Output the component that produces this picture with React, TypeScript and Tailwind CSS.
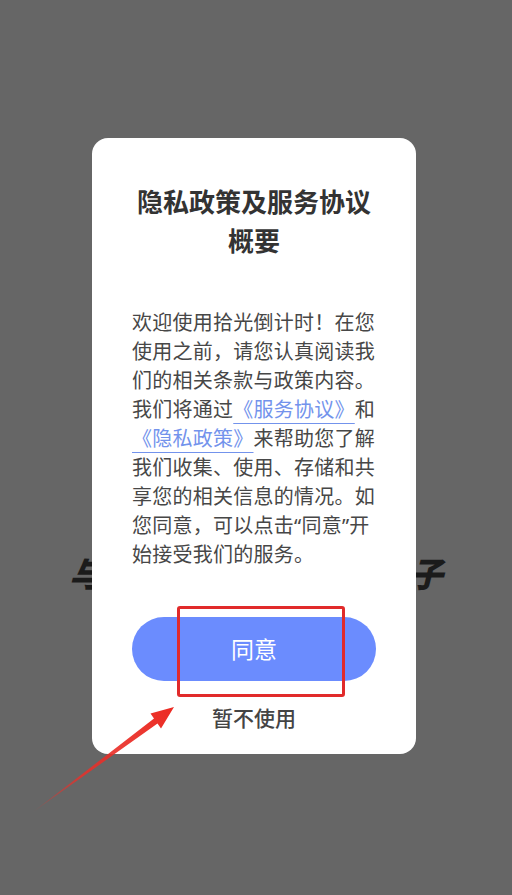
import React from "react";

const font = { fontFamily: '"Noto Sans", "Noto Sans CJK SC", sans-serif' };

export default function App() {
  return (
    <div className="relative w-full h-[895px] overflow-hidden bg-[#666666]" style={font}>
      {/* page behind the dimmed overlay */}
      <div className="flex flex-col items-center pt-[552px]">
        <div className="text-[34px] leading-[44px] font-black italic text-[#1b1b1b] whitespace-nowrap">
          与你一起珍惜每一个日子
        </div>
      </div>

      {/* dialog overlay */}
      <div className="absolute inset-0 flex justify-start items-start pt-[138px] pl-[92px]">
        <div className="w-[324px] h-[616px] bg-white rounded-[16px] flex flex-col items-center pt-[45px] px-[40px]">
          <div className="text-[26px] leading-[39px] font-bold text-[#333333] text-center whitespace-nowrap">
            <div>隐私政策及服务协议</div>
            <div>概要</div>
          </div>

          <div className="mt-[47px] w-[244px] text-[20px] leading-[29px] text-[#474747] tracking-[0.25px]">
            <div className="whitespace-nowrap">欢迎使用拾光倒计时！在您</div>
            <div className="whitespace-nowrap">使用之前，请您认真阅读我</div>
            <div className="whitespace-nowrap">们的相关条款与政策内容。</div>
            <div className="whitespace-nowrap">
              我们将通过<span className="text-[#7393ec] underline underline-offset-[6px] decoration-[1px]">《服务协议》</span>和
            </div>
            <div className="whitespace-nowrap">
              <span className="text-[#7393ec] underline underline-offset-[6px] decoration-[1px]">《隐私政策》</span>来帮助您了解
            </div>
            <div className="whitespace-nowrap">我们收集、使用、存储和共</div>
            <div className="whitespace-nowrap">享您的相关信息的情况。如</div>
            <div className="whitespace-nowrap">您同意，可以点击“同意”开</div>
            <div className="whitespace-nowrap">始接受我们的服务。</div>
          </div>

          <button className="mt-[48px] w-[244px] h-[64px] rounded-full bg-[#6b8cfe] text-white text-[23px] leading-[64px] flex items-center justify-center">
            同意
          </button>

          <div className="mt-[23px] text-[21px] leading-[29px] font-medium text-[#444444]">暂不使用</div>
        </div>
      </div>

      {/* annotation overlay: red box + arrow */}
      <div className="absolute left-[177px] top-[606px] w-[168px] h-[91px] border-[3.5px] border-[#e12a2a] rounded-[3px]" />
      <svg className="absolute left-0 top-0" width="512" height="895" viewBox="0 0 512 895">
        <defs>
          <linearGradient id="arrowGrad" x1="33" y1="812" x2="173" y2="708" gradientUnits="userSpaceOnUse">
            <stop offset="0" stopColor="#e8302a" stopOpacity="0.15" />
            <stop offset="0.35" stopColor="#e8302a" stopOpacity="0.85" />
            <stop offset="1" stopColor="#ec2a22" stopOpacity="1" />
          </linearGradient>
        </defs>
        <polygon
          points="33,812 154,718.5 150.5,713.5 174,707 161,728.5 157.5,723.5"
          fill="url(#arrowGrad)"
        />
      </svg>
    </div>
  );
}
